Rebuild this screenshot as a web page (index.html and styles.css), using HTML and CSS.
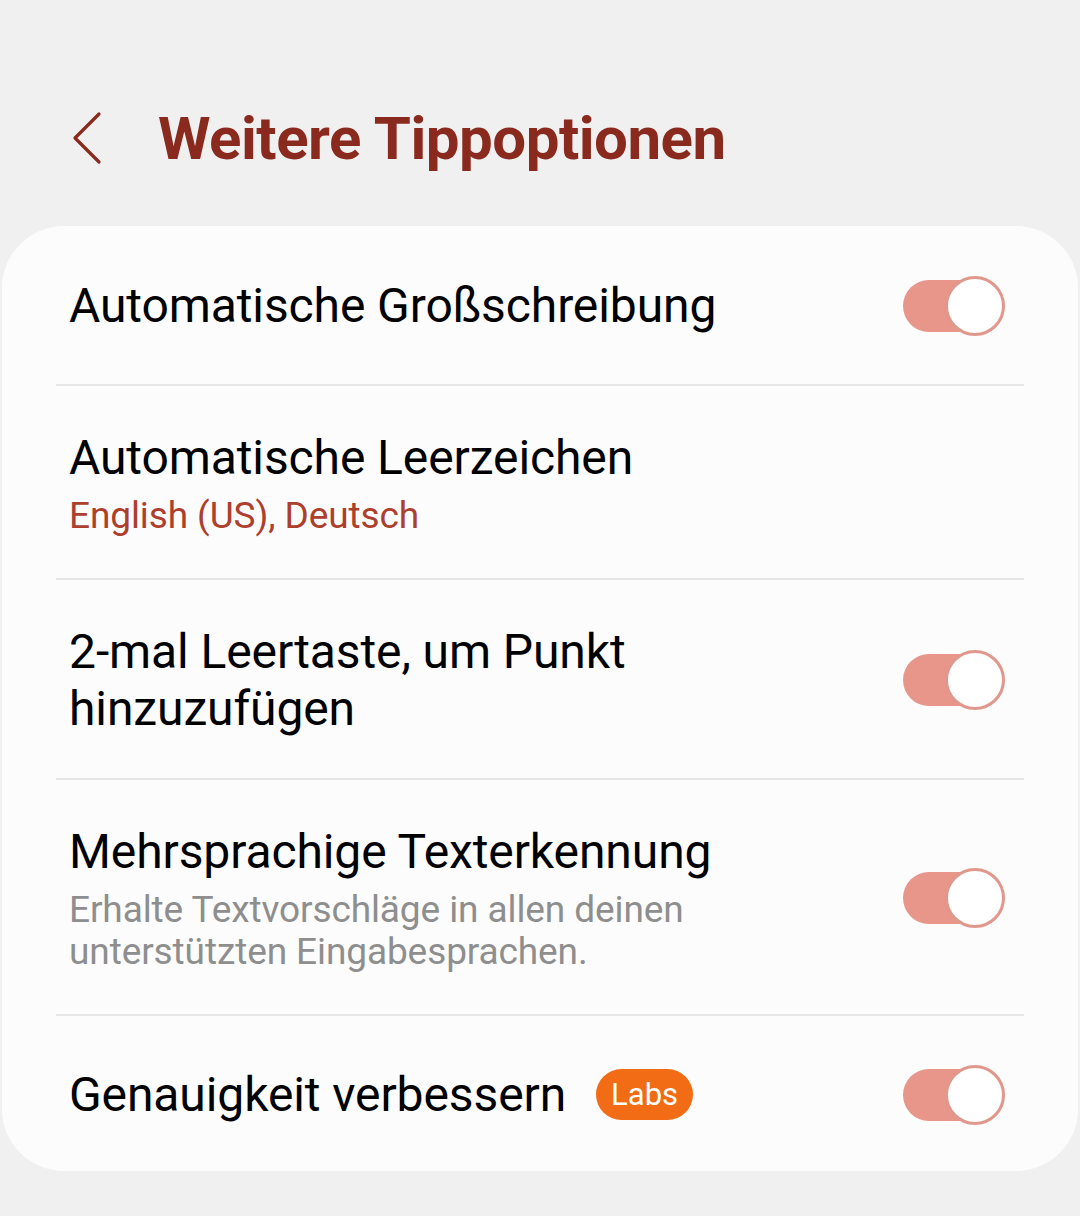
FILE: index.html
```html
<!DOCTYPE html>
<html lang="de">
<head>
    <meta charset="UTF-8">
    <meta name="viewport" content="width=device-width, initial-scale=1.0">
    <title>Weitere Tippoptionen</title>
    <link rel="stylesheet" href="styles.css">
</head>
<body>
    <header class="top-bar">
        <button class="back-btn" aria-label="Zurück">
            <svg width="34" height="54" viewBox="0 0 34 54">
                <path d="M29 3 L5 27 L29 51" fill="none" stroke="#8a2a1e" stroke-width="3.2" stroke-linecap="round" stroke-linejoin="round"/>
            </svg>
        </button>
        <h1 class="page-title">Weitere Tippoptionen</h1>
    </header>

    <div class="settings-card">
        <div class="setting-row">
            <div class="setting-text">
                <div class="setting-title">Automatische Großschreibung</div>
            </div>
            <div class="switch on"><span class="thumb"></span></div>
        </div>
        <div class="divider"></div>

        <div class="setting-row">
            <div class="setting-text">
                <div class="setting-title">Automatische Leerzeichen</div>
                <div class="setting-sub accent">English (US), Deutsch</div>
            </div>
        </div>
        <div class="divider"></div>

        <div class="setting-row">
            <div class="setting-text">
                <div class="setting-title wrap">2-mal Leertaste, um Punkt<br>hinzuzufügen</div>
            </div>
            <div class="switch on"><span class="thumb"></span></div>
        </div>
        <div class="divider"></div>

        <div class="setting-row">
            <div class="setting-text">
                <div class="setting-title">Mehrsprachige Texterkennung</div>
                <div class="setting-sub">Erhalte Textvorschläge in allen deinen<br>unterstützten Eingabesprachen.</div>
            </div>
            <div class="switch on"><span class="thumb"></span></div>
        </div>
        <div class="divider"></div>

        <div class="setting-row last">
            <div class="setting-text inline">
                <div class="setting-title">Genauigkeit verbessern</div>
                <span class="badge">Labs</span>
            </div>
            <div class="switch on"><span class="thumb"></span></div>
        </div>
    </div>
</body>
</html>
```

FILE: styles.css
```css
* {
    margin: 0;
    padding: 0;
    box-sizing: border-box;
}

body {
    font-family: Roboto, "Noto Sans", sans-serif;
    background: #f0f0f0;
    color: #000;
    width: 1080px;
    height: 1216px;
    overflow: hidden;
}

.top-bar {
    display: flex;
    align-items: center;
    height: 80px;
    margin-top: 98px;
    margin-bottom: 48px;
    padding-left: 70px;
}

.back-btn {
    border: none;
    background: none;
    width: 34px;
    height: 54px;
    display: flex;
    margin-right: 54px;
}

.page-title {
    font-size: 60px;
    font-weight: 700;
    color: #8a2a1e;
    letter-spacing: -0.5px;
}

.settings-card {
    background: #fcfcfc;
    margin: 0 2px;
    border-radius: 62px;
    overflow: hidden;
}

.setting-row {
    display: flex;
    align-items: center;
    justify-content: space-between;
    min-height: 158px;
    padding: 43px 73px 41px 67px;
}

.setting-row.last {
    min-height: 155px;
}

.setting-text {
    display: flex;
    flex-direction: column;
}

.setting-text.inline {
    flex-direction: row;
    align-items: center;
    gap: 30px;
}

.setting-title {
    font-size: 48px;
    line-height: 58px;
    letter-spacing: -0.1px;
}

.setting-title.wrap {
    line-height: 57px;
}

.setting-sub {
    font-size: 37px;
    line-height: 42px;
    margin-top: 8px;
    color: #8e8e8e;
    letter-spacing: -0.1px;
}

.setting-sub.accent {
    color: #ad3f2d;
}

.badge {
    background: #f26c15;
    color: #fff;
    font-size: 31px;
    line-height: 51px;
    height: 51px;
    padding: 0 15px;
    border-radius: 26px;
}

.divider {
    height: 2px;
    background: #e6e6e6;
    margin: 0 54px;
}

.switch {
    position: relative;
    width: 102px;
    height: 60px;
    flex-shrink: 0;
}

.switch::before {
    content: '';
    position: absolute;
    left: 0;
    top: 4px;
    width: 100px;
    height: 52px;
    border-radius: 26px;
    background: #e8958a;
}

.switch .thumb {
    position: absolute;
    right: 0;
    top: 0;
    width: 60px;
    height: 60px;
    border-radius: 50%;
    background: #fff;
    border: 3px solid #e0978c;
}
```
